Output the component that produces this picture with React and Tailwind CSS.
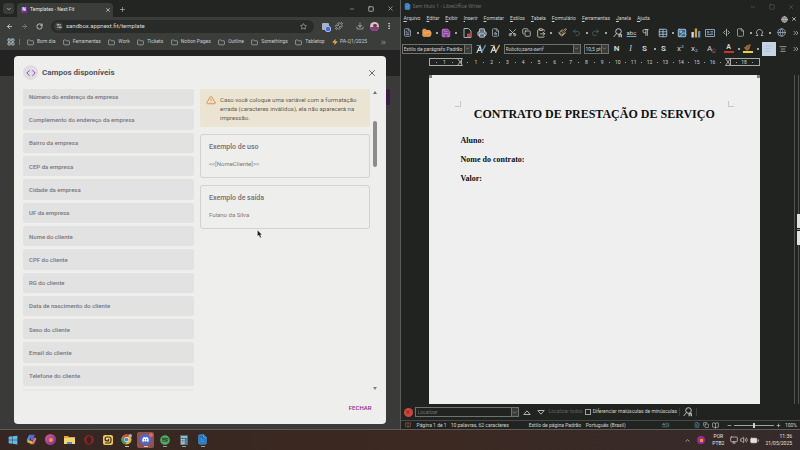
import {
  ChevronDown, ChevronUp, ChevronsRight, X, Plus, Minus, Square, ArrowLeft, ArrowRight, RotateCw, Settings2,
  Star, Puzzle, Download, EllipsisVertical, LayoutGrid, Folder, Zap, Code, TriangleAlert, Scissors, Copy,
  ClipboardPaste, Paintbrush, Undo2, Redo2, Pilcrow, Table, Image, Omega, Globe, Printer,
  FileText, File, FolderOpen, Save, SeparatorHorizontal, Eraser, AlignCenter, AlignLeft, Monitor, Volume2,
  BatteryMedium, BookOpen, LetterText, FileSearch,
} from "lucide-react";
import { FaSpotify, FaWindows, FaDiscord, FaOpera } from "react-icons/fa";

const bookmarks = ["Bom dia", "Ferramentas", "Work", "Tickets", "Notion Pages", "Outline", "Somethings", "Tabletop"];

const fields = [
  "Número do endereço da empresa",
  "Complemento do endereço da empresa",
  "Bairro da empresa",
  "CEP da empresa",
  "Cidade da empresa",
  "UF da empresa",
  "Nome do cliente",
  "CPF do cliente",
  "RG do cliente",
  "Data de nascimento do cliente",
  "Sexo do cliente",
  "Email do cliente",
  "Telefone do cliente",
];

const menus = ["Arquivo", "Editar", "Exibir", "Inserir", "Formatar", "Estilos", "Tabela", "Formulário", "Ferramentas", "Janela", "Ajuda"];

// w: cell width, wider cells leave room for a caret or a separator
const tools = [
  { name: "Novo", w: "w-[19px]", caret: true, icon: <FileText size={9} className="text-[#9fb4c4]" /> },
  { name: "Abrir", w: "w-[19px]", caret: true, icon: <FolderOpen size={10} className="fill-[#e8943c] text-[#f0b878]" /> },
  { name: "Salvar", w: "w-[22px]", caret: true, icon: <Save size={10} className="fill-[#8c3f9c] text-[#c48ad0]" /> },
  { name: "Exportar PDF", w: "w-[14px]", icon: <PdfIcon /> },
  { name: "Imprimir", w: "w-[14px]", icon: <Printer size={10} className="fill-[#5b6b78] text-[#c6ccd0]" /> },
  { name: "Visualizar", w: "w-[17px]", icon: <FileSearch size={9} className="text-[#a9bac6]" /> },
  { name: "Cortar", w: "w-[14px]", icon: <Scissors size={9} className="-rotate-90" /> },
  { name: "Copiar", w: "w-[14px]", icon: <Copy size={9} /> },
  { name: "Colar", w: "w-[22px]", caret: true, icon: <ClipboardPaste size={10} className="text-[#d8cdb4]" /> },
  { name: "Clonar", w: "w-[14px]", icon: <Paintbrush size={9} className="text-[#e0c98c]" /> },
  { name: "Desfazer", w: "w-[19px]", caret: true, icon: <Undo2 size={9} className="text-[#4f6474]" /> },
  { name: "Refazer", w: "w-[22px]", caret: true, icon: <Redo2 size={9} className="text-[#4f6474]" /> },
  { name: "Localizar", w: "w-[14px]", icon: <FindIcon /> },
  { name: "Ortografia", w: "w-[14px]", icon: <span className="text-[6px] leading-none underline decoration-[#7aa0c8]">abc</span> },
  { name: "Marcas", w: "w-[17px]", icon: <Pilcrow size={9} /> },
  { name: "Tabela", w: "w-[19px]", caret: true, icon: <Table size={10} className="text-[#a9c6de]" /> },
  { name: "Imagem", w: "w-[14px]", icon: <Image size={10} className="fill-[#2f6a9c] text-[#c8d4dc]" /> },
  { name: "Gráfico", w: "w-[14px]", icon: <BarsIcon /> },
  { name: "Caixa de texto", w: "w-[17px]", icon: <TextBoxIcon /> },
  { name: "Quebra", w: "w-[14px]", icon: <SeparatorHorizontal size={9} className="rotate-90" /> },
  { name: "Campo", w: "w-[19px]", caret: true, icon: <File size={9} className="text-[#a9bac6]" /> },
  { name: "Símbolo", w: "w-[22px]", caret: true, icon: <Omega size={9} /> },
  { name: "Hiperlink", w: "w-[14px]", icon: <Globe size={9} className="text-[#9fb4c4]" /> },
];

const formats = [
  { name: "Negrito", w: "w-[14px]", icon: <b>N</b> },
  { name: "Itálico", w: "w-[14px]", icon: <i className="font-['Liberation_Serif',serif]">I</i> },
  { name: "Sublinhado", w: "w-[19px]", caret: true, icon: <b>S</b> },
  { name: "Tachado", w: "w-[17px]", icon: <b>S</b> },
  { name: "Sobrescrito", w: "w-[14px]", icon: <span>x<span className="text-[#5b93c4]">²</span></span> },
  { name: "Subscrito", w: "w-[17px]", icon: <span>x<span className="text-[#5b93c4]">₂</span></span> },
  { name: "Limpar formatação", w: "w-[17px]", icon: <span className="flex items-end">A<Eraser size={5} className="-ml-[1px] text-[#d87078]" /></span> },
  { name: "Cor da fonte", w: "w-[19px]", caret: true, icon: <span className="w-[10px] border-b-2 border-[#c03830] text-[7px] leading-[7px] font-bold">A</span> },
  { name: "Realce", w: "w-[19px]", caret: true, icon: <span className="flex w-[10px] justify-center border-b-2 border-[#e8d040]"><Paintbrush size={7} className="fill-[#8c5c30] text-[#d89850]" /></span> },
];

function PdfIcon() {
  return (
    <svg width="9" height="10" viewBox="0 0 9 10" fill="none">
      <path d="M1 .5h4.5L8 3v6.500H1z" stroke="#a4acb0" />
      <rect x="4" y="5.500" width="4.500" height="3.500" fill="#c0453f" />
    </svg>
  );
}

function FindIcon() {
  return (
    <svg width="10" height="10" viewBox="0 0 10 10" fill="none" stroke="#c4c8ca">
      <circle cx="5.500" cy="3.500" r="2.800" />
      <path d="M3.500 5.500.7 9M6 9.300V6.500h2.500v2.800M6 8h2.500" strokeWidth=".9" />
    </svg>
  );
}

function BarsIcon() {
  return (
    <svg width="10" height="10" viewBox="0 0 10 10">
      <rect x=".5" y="4" width="2.300" height="5.500" fill="#d9d9d9" />
      <rect x="3.800" y=".5" width="2.300" height="9" fill="#e09a3e" />
      <rect x="7" y="3" width="2.300" height="6.500" fill="#5b93c4" />
    </svg>
  );
}

function TextBoxIcon() {
  return (
    <svg width="10" height="10" viewBox="0 0 10 10" fill="none">
      <path d="M.5 1.500h9v7h-9z" stroke="#8aa0b0" />
      <path d="M2 6.500h6M5.500 3.500H8M5.500 5H8" stroke="#a9b4bc" strokeWidth=".7" />
      <path d="M2 3h2.300v2.300H2z" fill="#4d86b8" />
    </svg>
  );
}

function StyleIcon({ color }) {
  return (
    <svg width="10" height="10" viewBox="0 0 10 10" fill="none" strokeLinecap="round">
      <path d="M1 8.500 4 2l1.800 6.500M2 6.300h3.300" stroke="#d4d8da" strokeWidth="1.200" />
      <path d="M9.300 1.500 6 7.500" stroke={color} strokeWidth="1.500" />
      <path d="M1 1.500h2" stroke={color} />
    </svg>
  );
}

function Caret() {
  return <span className="size-[2px] shrink-0 rounded-full bg-[#d0d0d0]" />;
}

function Sep() {
  return <span className="h-2 w-px shrink-0 bg-[#3c3e3c]" />;
}

function ToolCells({ items }) {
  return items.map((t) => (
    <button key={t.name} aria-label={t.name} className={"flex shrink-0 items-center gap-1 " + t.w}>
      <span className="flex w-[10px] shrink-0 justify-center">{t.icon}</span>
      {t.caret && <Caret />}
    </button>
  ));
}

function Browser() {
  return (
    <section className="flex min-w-0 flex-1 flex-col border-r border-[#5a5c5a] bg-[#3b3d3b] font-[Roboto,sans-serif] text-[#c9cbc9]">
      <div className="flex h-[17px] items-end bg-[#222522] pl-[3px]">
        <button aria-label="Pesquisar guias" className="mb-[3px] flex size-[11px] items-center justify-center rounded-[3px] bg-[#3a3c3a]">
          <ChevronDown size={6} strokeWidth={3} />
        </button>
        <div className="ml-[3px] flex h-[14px] w-24 items-center rounded-t-[4px] bg-[#3b3d3b] pr-[2px] pl-1">
          <span className="flex size-[6px] items-center justify-center bg-[#7c2b8c] text-[5px] font-bold text-white">N</span>
          <span className="ml-[3px] flex-1 text-[5px] whitespace-nowrap text-[#e2e4e2]">Templates - Next Fit</span>
          <button aria-label="Fechar guia"><X size={6} strokeWidth={3} /></button>
        </div>
        <button aria-label="Nova guia" className="mb-1 ml-[6px]"><Plus size={7} strokeWidth={2} /></button>
        <div className="mb-[5px] ml-auto flex items-center gap-[13px] pr-[6px]">
          <button aria-label="Minimizar"><Minus size={6} /></button>
          <button aria-label="Maximizar"><Square size={6} strokeWidth={3} /></button>
          <button aria-label="Fechar"><X size={7} strokeWidth={2} /></button>
        </div>
      </div>

      <div className="flex h-[18px] items-center pr-[6px] pl-[6px]">
        <div className="flex w-[45px] items-center gap-2">
          <button aria-label="Voltar"><ArrowLeft size={7} strokeWidth={3} /></button>
          <button aria-label="Avançar" className="text-[#7c7e7c]"><ArrowRight size={7} strokeWidth={3} /></button>
          <button aria-label="Recarregar"><RotateCw size={7} strokeWidth={3} /></button>
        </div>
        <div className="flex h-[13px] flex-1 items-center rounded-full bg-[#282b28] px-[3px]">
          <span className="flex size-[9px] items-center justify-center rounded-full bg-[#3b3d3b]"><Settings2 size={6} strokeWidth={3} /></span>
          <input
            aria-label="Endereço"
            className="ml-[3px] min-w-0 flex-1 bg-transparent text-[6px] leading-[8px] text-[#dcdedc] outline-none"
            defaultValue="sandbox.appnext.fit/template"
          />
          <button aria-label="Favoritar" className="mr-1"><Star size={7} strokeWidth={2} /></button>
        </div>
        <div className="flex w-[80px] items-center justify-between pl-2">
          <span className="relative size-[7px] rounded-[1px] bg-[#aab4bc]">
            <span className="absolute top-[3px] left-[3px] size-[6px] rounded-[2px] border border-[#a4bcf4] bg-[#4468d8]" />
          </span>
          <button aria-label="Extensões"><Puzzle size={8} strokeWidth={2} /></button>
          <Sep />
          <button aria-label="Downloads"><Download size={8} strokeWidth={2} /></button>
          <span className="flex size-[9px] flex-col overflow-hidden rounded-full bg-[#d8c4c8]">
            <span className="mx-auto mt-[2px] h-[3px] w-1 rounded-full bg-[#6c4038]" />
            <span className="h-1 w-full bg-[#8c3c84]" />
          </span>
          <button aria-label="Menu"><EllipsisVertical size={8} strokeWidth={3} /></button>
        </div>
      </div>

      <nav className="flex h-[15px] items-center pr-3 pb-[1px] pl-[7px] text-[5px] whitespace-nowrap">
        <LayoutGrid size={8} strokeWidth={3} className="text-[#a8bcc8]" />
        <span className="mx-1 h-[6px] w-px bg-[#55758a]" />
        <div className="flex flex-1 items-center justify-between pl-[3px]">
          {bookmarks.map((name) => (
            <a key={name} href="#" className="flex items-center gap-[3px]">
              <Folder size={7} strokeWidth={2} />
              {name}
            </a>
          ))}
          <a href="#" className="flex items-center gap-[2px]">
            <Zap size={6} className="fill-[#f0a848] text-[#f0a848]" />
            PA-Q1/2025
          </a>
          <button aria-label="Mais favoritos" className="ml-[6px]"><ChevronsRight size={7} /></button>
        </div>
      </nav>

      <main className="relative flex flex-1 flex-col border-b border-[#5c5c5c] bg-linear-to-b from-[#222322] from-[26px] to-[#393a39] to-[26px] px-[14px] pt-[6px] pb-[5px]">
        <span className="absolute top-[39px] right-[10px] h-4 w-6 rounded-[2px] bg-[#3c1c42]" />
        <FieldsDialog />
      </main>
    </section>
  );
}

function FieldsDialog() {
  return (
    <div role="dialog" aria-labelledby="dialog-title" className="relative flex flex-1 flex-col rounded-[4px] bg-[#eeeeed]">
      <header className="flex h-[33px] shrink-0 items-center pr-[9px] pl-[9px]">
        <span className="flex size-[15px] items-center justify-center rounded-full bg-[#dfdde1] text-[#8a2d9c]">
          <Code size={10} />
        </span>
        <h1 id="dialog-title" className="ml-1 flex-1 text-[8px] leading-[12px] font-bold text-[#55555a]">Campos disponíveis</h1>
        <button aria-label="Fechar janela" className="text-[#505054]"><X size={10} strokeWidth={2} /></button>
      </header>

      <div className="flex flex-1 gap-[6px] overflow-hidden pr-2 pl-[9px]">
        <ul className="-mt-[3px] flex w-[171px] flex-col gap-[3px]">
          {fields.map((field) => (
            <li key={field} className="flex flex-1 items-center rounded-[2px] bg-[#e2e2e2] px-[6px] text-[6px] font-medium text-[#76767c]">
              {field}
            </li>
          ))}
          <li className="h-[2px] rounded-t-[2px] bg-[#e8e8e8]" />
        </ul>

        <div className="min-w-0 flex-1">
          <div role="alert" className="flex gap-1 rounded-b-[2px] bg-[#ece4d3] pt-[6px] pr-2 pb-[5px] pl-[6px]">
            <TriangleAlert size={10} className="shrink-0 text-[#dc8434]" />
            <p className="text-[6px] leading-[9px] text-[#665c4e]">
              Caso você coloque uma variável com a formatação errada (caracteres inválidos), ela não aparecerá na impressão.
            </p>
          </div>
          <Example title="Exemplo de uso" text="<<[NomeCliente]>>" />
          <Example title="Exemplo de saída" text="Fulano da Silva" />
        </div>

        <div className="-ml-[4px] flex w-[6px] flex-col items-center pt-[2px]">
          <span className="border-x-[2px] border-b-[3px] border-x-transparent border-b-[#707070]" />
          <span className="mt-[27px] h-[46px] w-1 rounded-full bg-[#8c8c8c]" />
          <span className="mt-auto mb-[1px] border-x-[2px] border-t-[3px] border-x-transparent border-t-[#808080]" />
        </div>
      </div>

      <footer className="flex h-[33px] shrink-0 items-center justify-end pr-[14px]">
        <button className="text-[6px] font-medium text-[#8a2d9c]">FECHAR</button>
      </footer>
    </div>
  );
}

function Example({ title, text }) {
  return (
    <div className="mt-[7px] flex h-11 flex-col gap-2 rounded-[3px] border border-[#d2d2d4] px-2 pt-2">
      <h2 className="text-[7px] leading-[9px] font-medium text-[#707075]">{title}</h2>
      <p className="text-[6px] leading-[8px] text-[#7c7c82]">{text}</p>
    </div>
  );
}

function Combo({ label, value, className }) {
  return (
    <div className={"relative flex h-[10px] shrink-0 items-center border border-[#707270] " + className}>
      <select aria-label={label} className="w-full appearance-none bg-transparent pl-[1px] text-[5px] leading-[8px] outline-none">
        <option>{value}</option>
      </select>
      <span className="pointer-events-none absolute inset-y-0 right-0 flex w-[7px] items-center justify-center border-l border-[#707270] bg-[#3a3c3a]">
        <ChevronDown size={5} />
      </span>
    </div>
  );
}

function Ruler() {
  return (
    <div className="mr-10 ml-7 grid h-[7px]">
      <div className="col-start-1 row-start-1 flex justify-between">
        <span className="w-[10%] border border-[#a8aaa8]" />
        <span className="w-[9%] border border-[#a8aaa8]" />
      </div>
      <div className="col-start-1 row-start-1 flex items-center justify-between text-[5px] leading-none">
        {Array.from({ length: 43 }, (_, i) => {
          const cm = Math.abs(i / 2 - 2);
          if (i === 0 || i > 41) return <span key={i} className="w-0" />;
          if (i === 4 || i === 38) return <span key={i} className="flex w-0 justify-center"><Hourglass /></span>;
          return (
            <span key={i} className="flex w-0 justify-center">
              {i % 2 === 0 && cm < 19 ? cm : <span className="size-px shrink-0 bg-[#a0a2a0]" />}
            </span>
          );
        })}
      </div>
    </div>
  );
}

function Hourglass() {
  return (
    <svg width="6" height="8" viewBox="0 0 6 8" fill="#222522" stroke="#c4c6c4" strokeWidth=".8" className="shrink-0">
      <path d="M.5.500h5L3 4l2.500 3.500h-5L3 4z" />
    </svg>
  );
}

function Writer() {
  return (
    <section className="flex min-w-0 flex-1 flex-col border-b border-[#5c5c5c] bg-[#202320] font-[Roboto,sans-serif] text-[5px] whitespace-nowrap text-[#d0d2d0]">
      <div className="flex h-3 items-center pt-[1px] pr-[6px] pl-[3px] text-[#686a68]">
        <FileText size={7} className="mr-[2px] fill-[#2c7cc0] text-[#5ca4e0]" />
        <span className="flex-1">Sem título 1 - LibreOffice Writer</span>
        <div className="flex items-center gap-[13px]">
          <button aria-label="Minimizar"><Minus size={6} /></button>
          <button aria-label="Maximizar"><Square size={6} /></button>
          <button aria-label="Fechar"><X size={6} /></button>
        </div>
      </div>

      <div className="flex h-[13px] items-center gap-[6px] pt-[1px] pr-[3px] pl-[3px]">
        {menus.map((m) => (
          <button key={m} className="first-letter:underline">{m}</button>
        ))}
        <Globe size={7} className="ml-auto fill-[#686a68]" />
        <button aria-label="Fechar documento" className="-ml-[3px]"><X size={6} strokeWidth={3} /></button>
      </div>

      <div className="flex h-[15px] items-center pl-[2px]">
        <ToolCells items={tools} />
        <ChevronsRight size={8} className="ml-auto" />
      </div>

      <div className="flex h-[17px] items-center pl-[1px]">
        <Combo label="Estilo de parágrafo" value="Estilo de parágrafo Padrão" className="w-[70px]" />
        <div className="flex w-8 items-center justify-center gap-1">
          <button aria-label="Atualizar estilo"><StyleIcon color="#5b93c4" /></button>
          <button aria-label="Novo estilo"><StyleIcon color="#d8a860" /></button>
        </div>
        <Combo label="Nome da fonte" value="Roboto;sans-serif" className="w-[77px] italic" />
        <Combo label="Tamanho da fonte" value="10,5 pt" className="ml-[3px] w-[25px]" />
        <div className="ml-[3px] flex flex-1 items-center text-[8px] leading-none">
          <ToolCells items={formats} />
          <button aria-label="Alinhar à esquerda" className="flex size-[14px] shrink-0 items-center justify-center bg-[#c4d6e4] text-[#a8c0d4]"><AlignLeft size={9} /></button>
          <button aria-label="Centralizar" className="ml-[3px]"><AlignCenter size={8} /></button>
          <ChevronsRight size={8} className="ml-auto" />
        </div>
      </div>

      <div className="h-[18px] pt-[1px]"><Ruler /></div>
      <Paper />

      <div className="flex h-4 items-center pl-[3px]">
        <button aria-label="Fechar localizar" className="flex size-[9px] items-center justify-center rounded-full bg-[#c8483c] text-[#7c2018]"><X size={6} strokeWidth={3} /></button>
        <div className="ml-[2px] flex h-[10px] w-[104px] items-center border border-[#707270]">
          <input aria-label="Localizar" placeholder="Localizar" className="min-w-0 flex-1 bg-transparent pl-[2px] leading-[8px] outline-none placeholder:text-[#707270]" />
          <span className="flex h-full w-[7px] items-center justify-center border-l border-[#707270] bg-[#3a3c3a]"><ChevronDown size={5} /></span>
        </div>
        <div className="flex w-[26px] items-center justify-end gap-[6px]">
          <button aria-label="Anterior"><svg width="8" height="5" viewBox="0 0 8 5" fill="none" stroke="currentColor" strokeWidth=".8"><path d="M.8 4.500h6.400L4 .8z" /></svg></button>
          <button aria-label="Próximo"><svg width="8" height="5" viewBox="0 0 8 5" fill="none" stroke="currentColor" strokeWidth=".8"><path d="M.8.500h6.400L4 4.200z" /></svg></button>
        </div>
        <button className="ml-1 text-[#606260]">Localizar todos</button>
        <label className="ml-[2px] flex items-center gap-[2px]">
          <input type="checkbox" className="size-[6px] appearance-none border border-[#a0a2a0]" />
          Diferenciar maiúsculas de minúsculas
        </label>
        <div className="ml-[2px] flex items-center gap-[3px]"><Sep /><button aria-label="Localizar e substituir"><FindIcon /></button><Sep /></div>
      </div>

      <footer className="flex h-[9px] items-center border-t border-[#484a48] pr-[3px] pl-1 leading-[8px]">
        <BookOpen size={6} className="mr-[6px] text-[#d06058]" />
        <span>Página 1 de 1</span>
        <span className="mx-[2px]"><Sep /></span>
        <span className="w-[78px]">10 palavras, 62 caracteres</span>
        <span className="w-[57px]">Estilo de página Padrão</span>
        <span>Português (Brasil)</span>
        <span className="ml-9 flex items-center text-[#88a4bc]"><LetterText size={6} />I</span>
        <div className="ml-auto flex items-center gap-[3px]">
          <FileText size={6} className="text-[#5b93c4]" />
          <Copy size={6} />
          <BookOpen size={7} />
        </div>
        <label className="ml-2 flex items-center gap-[2px]">
          <Minus size={5} strokeWidth={3} />
          <input
            type="range"
            aria-label="Zoom"
            className="h-[6px] w-10 appearance-none bg-[linear-gradient(#a0a2a0,#a0a2a0)] bg-[size:100%_1px] bg-center bg-no-repeat [&::-webkit-slider-thumb]:h-[5px] [&::-webkit-slider-thumb]:w-[2px] [&::-webkit-slider-thumb]:appearance-none [&::-webkit-slider-thumb]:bg-[#d0d2d0]"
          />
          <Plus size={5} strokeWidth={3} />
        </label>
        <span className="ml-1">100%</span>
      </footer>
    </section>
  );
}

function Paper() {
  return (
    <div className="flex flex-1">
      <article className="ml-7 flex-1 bg-[#eeefee] font-['Liberation_Serif',serif] font-bold text-[#101010]">
        <div className="flex justify-between">
          <span className="size-[3px] bg-[#808280]" />
          <span className="size-[3px] bg-[#808280]" />
        </div>
        <div className="mt-[23px] flex justify-between px-[26px]">
          <span className="size-[6px] border-r border-b border-[#c8c8c8]" />
          <span className="size-[6px] border-b border-l border-[#c8c8c8]" />
        </div>
        <h1 className="text-center text-[12px] leading-[15px]">CONTRATO DE PRESTAÇÃO DE SERVIÇO</h1>
        <div className="mt-[14px] flex flex-col gap-[9px] px-8 text-[8px] leading-[10px]">
          <p>Aluno:</p>
          <p>Nome do contrato:</p>
          <p>Valor:</p>
        </div>
      </article>
      <div className="flex w-10 justify-end gap-[2px]">
        <span className="w-px bg-[#505250]" />
        <div className="flex w-[3px] flex-col items-center">
          <span className="w-px flex-7 bg-[#505250]" />
          <span className="h-[14px] w-[3px] bg-[#e0e2e0]" />
          <span className="my-px h-px w-[3px] bg-[#8c8e8c]" />
          <span className="h-[14px] w-[3px] bg-[#e0e2e0]" />
          <span className="w-px flex-8 bg-[#505250]" />
        </div>
      </div>
    </div>
  );
}

function Taskbar() {
  return (
    <footer className="flex h-5 shrink-0 items-center bg-linear-to-r from-[#352622] via-[#3c2921] to-[#352a2b] pr-2 pl-1 font-[Roboto,sans-serif] text-[#e4e0de]">
      <div className="flex">
        <TaskButton name="Iniciar"><FaWindows size={10} className="text-[#5cbcf0]" /></TaskButton>
        <TaskButton name="Copilot">
          <svg width="11" height="11" viewBox="0 0 11 11" fill="none" strokeWidth="2.600" strokeLinecap="round">
            <path d="M4 2 2 6" stroke="#3c94e0" />
            <path d="M4.500 2h2.500L6 5" stroke="#5868dc" />
            <path d="M9 5 7 9H5" stroke="#e07868" />
            <path d="M2.500 7.500 5 8" stroke="#dcb44c" />
          </svg>
        </TaskButton>
        <TaskButton name="Navegador">
          <span className="flex size-[11px] items-center justify-center rounded-full bg-linear-to-br from-[#e05878] to-[#7428a0]"><span className="size-1 rounded-full bg-[#f09848]" /></span>
        </TaskButton>
        <TaskButton name="Arquivos">
          <svg width="11" height="10" viewBox="0 0 11 10">
            <path d="M0 1h4l1 1h6v7H0z" fill="#e0a838" />
            <path d="M0 3h11v6H0z" fill="#f4d474" />
            <path d="M3 7h5v2H3z" fill="#4c90c8" />
          </svg>
        </TaskButton>
        <TaskButton name="Opera"><FaOpera size={10} className="text-[#8c2428]" /></TaskButton>
        <TaskButton name="Notas">
          <span className="flex size-[10px] items-center justify-center rounded-[2px] bg-[#ecc860]">
            <svg width="8" height="8" viewBox="0 0 8 8" fill="none" stroke="#3c2c18" strokeWidth="1.200"><path d="M1 7h4.500A2 2 0 0 0 7 5V3a2 2 0 0 0-2-2H3a1.800 1.800 0 0 0 0 3.800h1.500V3" /></svg>
          </span>
        </TaskButton>
        <TaskButton name="Chrome" line="bg-[#c8c4c0]">
          <svg width="11" height="11" viewBox="0 0 12 12">
            <circle cx="6" cy="6" r="5.500" fill="#e0b83c" />
            <path d="M6 6 1.200 3.300A5.500 5.500 0 0 1 10.800 3.300H6z" fill="#d84c40" />
            <path d="M6 6 1.200 3.300A5.500 5.500 0 0 0 5.500 11.500z" fill="#44a05c" />
            <circle cx="6" cy="6" r="2.600" fill="#eee" />
            <circle cx="6" cy="6" r="2" fill="#4484dc" />
            <circle cx="10" cy="2" r="2" fill="#b8b0b0" />
          </svg>
        </TaskButton>
        <TaskButton name="Discord" active line="bg-[#e0c4c0]">
          <span className="relative flex size-[11px] items-center justify-center rounded-full bg-[#5068d4]">
            <FaDiscord size={7} className="text-white" />
            <span className="absolute -top-[1px] -right-[2px] size-1 rounded-full bg-[#e86850]" />
          </span>
        </TaskButton>
        <TaskButton name="Spotify" line="bg-[#a09894]"><FaSpotify size={10} className="text-[#4cac68]" /></TaskButton>
        <TaskButton name="Calculadora" line="bg-[#a09894]">
          <svg width="8" height="10" viewBox="0 0 8 10">
            <path d="M0 0h8v10H0z" fill="#58686f" />
            <path d="M1 1h6v2H1z" fill="#7cc4e0" />
            <path d="M1 4h1.500v1.500H1zM3.200 4h1.500v1.500H3.200zM1 6.200h1.500v1.500H1zM3.200 6.200h1.500v1.500H3.200zM1 8.200h3.700v1H1z" fill="#d4dcdc" />
            <path d="M5.500 4H7v5.200H5.500z" fill="#3c8cc0" />
          </svg>
        </TaskButton>
        <TaskButton name="Writer" line="bg-[#a09894]"><FileText size={11} className="fill-[#1c6cb4] text-[#4ca4ec]" /></TaskButton>
      </div>
      <div className="ml-auto flex items-center text-right text-[5px] leading-[7px]">
        <ChevronUp size={7} strokeWidth={2} />
        <span className="ml-[6px] flex size-2 items-center justify-center rounded-full bg-[#9c2c94]"><span className="size-[3px] bg-[#f09048]" /></span>
        <button className="ml-[7px] text-center">POR<br />PTB2</button>
        <div className="ml-[6px] flex items-center gap-[2px]">
          <Monitor size={8} />
          <Volume2 size={8} />
          <BatteryMedium size={9} className="fill-[#e4e0de]" />
        </div>
        <time className="ml-[6px]">11:36<br />21/05/2025</time>
      </div>
    </footer>
  );
}

function TaskButton({ name, active, line, children }) {
  return (
    <button aria-label={name} className={"mr-[2px] flex h-4 w-[17px] flex-col items-center justify-center rounded-[2px] " + (active ? "bg-[#8c5450]" : "")}>
      <span className="flex h-[13px] items-center">{children}</span>
      <span className={"h-px w-1 " + (line || "")} />
    </button>
  );
}

export default function App() {
  return (
    <div className="relative flex min-h-screen flex-col overflow-hidden bg-[#202320]">
      <div className="flex flex-1">
        <Browser />
        <Writer />
      </div>
      <Taskbar />
      <svg className="pointer-events-none absolute top-[230px] left-[257px]" width="6" height="8" viewBox="0 0 6 8">
        <path d="M.5.300v6l1.400-1.200L3 7.700l1.200-.5L3.200 4.800H5z" fill="#181820" stroke="#f4f4f4" strokeWidth=".3" />
      </svg>
    </div>
  );
}
